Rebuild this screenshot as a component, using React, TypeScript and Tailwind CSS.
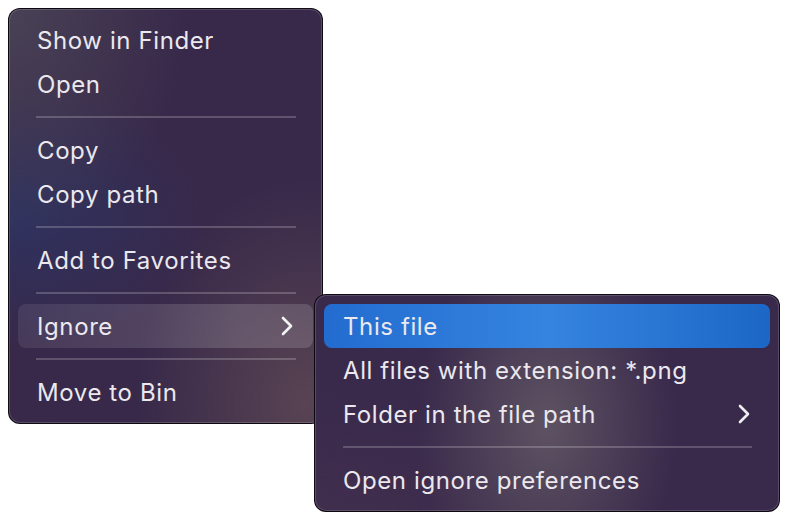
import React from "react";

const Chevron = () => (
  <svg width="12" height="20" viewBox="0 0 12 20" fill="none">
    <polyline
      points="2,2 10,10 2,18"
      stroke="rgba(255,255,255,0.92)"
      strokeWidth="2.6"
      strokeLinecap="round"
      strokeLinejoin="round"
    />
  </svg>
);

const Row = ({
  label,
  sub,
  hover,
  active,
}: {
  label: string;
  sub?: boolean;
  hover?: boolean;
  active?: boolean;
}) => (
  <div
    className={
      "h-[44px] flex items-center justify-between pl-[19px] pr-[20px] rounded-[8px] " +
      (active
        ? "bg-[linear-gradient(90deg,#226ccf_0%,#3584e0_50%,#1c67c6_100%)]"
        : hover
        ? "bg-[linear-gradient(90deg,rgba(255,255,255,0.08)_0%,rgba(255,255,255,0.16)_75%,rgba(255,255,255,0.14)_100%)]"
        : "")
    }
  >
    <span className="text-[24px] leading-none text-[#ebe8ee] tracking-[0.6px] translate-y-[1px]">{label}</span>
    {sub ? <Chevron /> : null}
  </div>
);

const Sep = ({ ml, mr }: { ml: string; mr: string }) => (
  <div className={"h-[22px] flex items-center " + ml + " " + mr}>
    <div className="h-[2px] w-full bg-white/20" />
  </div>
);

export default function App() {
  return (
    <div
      className="relative w-[788px] h-[520px] bg-white pt-[8px] pl-[8px]"
      style={{ fontFamily: "Inter, 'Open Sans', sans-serif" }}
    >
      <div className="w-[315px] h-[416px] rounded-[12px] border border-black/80 shadow-[inset_0_0_0_1px_rgba(255,255,255,0.16)] p-[9px] bg-[#38294a] bg-[radial-gradient(ellipse_at_0%_0%,rgba(80,76,90,0.7)_0%,rgba(80,76,90,0)_40%),radial-gradient(ellipse_at_0%_50%,rgba(40,56,110,0.6)_0%,rgba(40,56,110,0)_45%),radial-gradient(ellipse_at_95%_95%,rgba(110,85,88,0.6)_0%,rgba(110,85,88,0)_40%)] flex flex-col">
        <Row label="Show in Finder" />
        <Row label="Open" />
        <Sep ml="ml-[18px]" mr="mr-[17px]" />
        <Row label="Copy" />
        <Row label="Copy path" />
        <Sep ml="ml-[18px]" mr="mr-[17px]" />
        <Row label="Add to Favorites" />
        <Sep ml="ml-[18px]" mr="mr-[17px]" />
        <Row label="Ignore" sub hover />
        <Sep ml="ml-[18px]" mr="mr-[17px]" />
        <Row label="Move to Bin" />
      </div>

      <div className="absolute left-[314px] top-[294px] w-[466px] h-[218px] rounded-[12px] border border-black/80 shadow-[inset_0_0_0_1px_rgba(255,255,255,0.16)] p-[9px] bg-[#39294b] bg-[radial-gradient(ellipse_28%_90%_at_50%_60%,rgba(100,90,102,0.85)_0%,rgba(100,90,102,0)_100%),radial-gradient(ellipse_at_0%_100%,rgba(70,50,80,0.6)_0%,rgba(70,50,80,0)_40%)] flex flex-col">
        <Row label="This file" active />
        <Row label="All files with extension: *.png" />
        <Row label="Folder in the file path" sub />
        <Sep ml="ml-[19px]" mr="mr-[18px]" />
        <Row label="Open ignore preferences" />
      </div>
    </div>
  );
}
